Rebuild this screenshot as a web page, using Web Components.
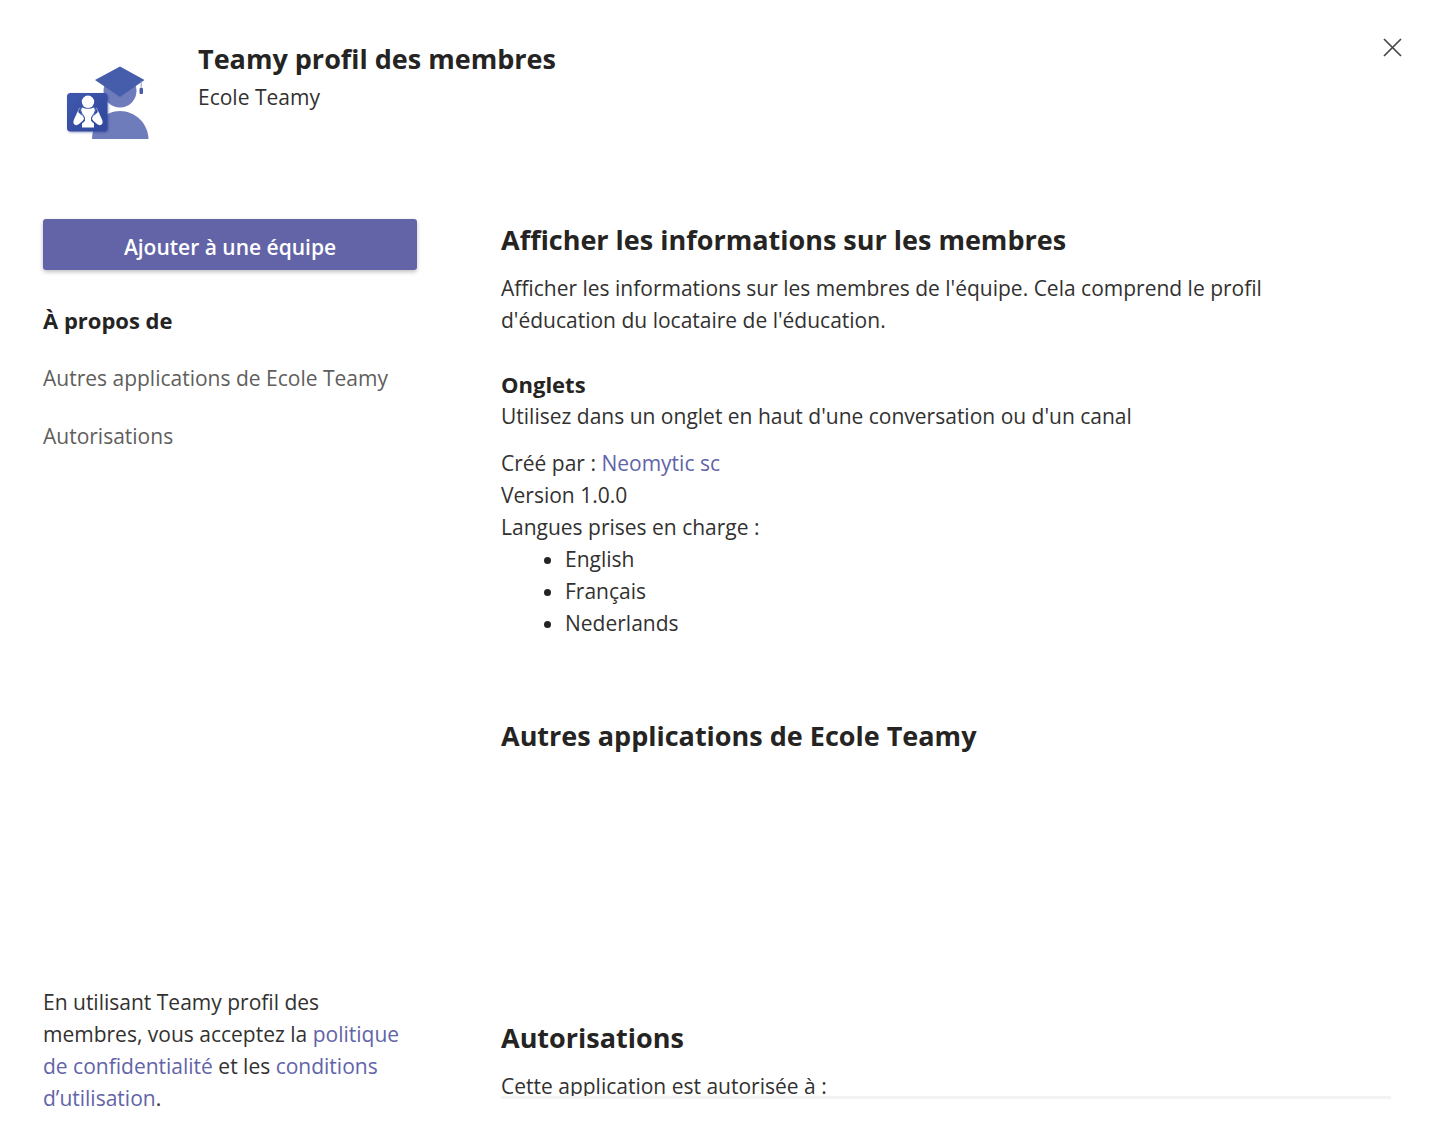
<!DOCTYPE html>
<html lang="fr">
<head>
<meta charset="utf-8">
<meta name="viewport" content="width=device-width, initial-scale=1">
<title>Teamy profil des membres</title>
<style>
  body {
    margin: 0;
    background: #fff;
    color: #323130;
    font: 21px/32px "Open Sans", "Noto Sans", sans-serif;
  }
</style>
</head>
<body>
<app-dialog>
  <app-header slot="header" name="Teamy profil des membres" publisher="Ecole Teamy"></app-header>
  <app-nav slot="side"></app-nav>
  <app-terms slot="side"></app-terms>
  <app-section heading="Afficher les informations sur les membres">
    <app-about></app-about>
  </app-section>
  <app-section heading="Autres applications de Ecole Teamy"></app-section>
  <app-section heading="Autorisations">Cette application est autorisée à :</app-section>
</app-dialog>

<script>
  const define = (name, html, fill) => {
    const template = document.createElement('template');
    template.innerHTML = `<style>
      :host { display: block; }
      * { box-sizing: border-box; }
      h1, h2, h3, p, ul { margin: 0; }
      a { color: #6264a7; text-decoration: none; }
      a:hover { text-decoration: underline; }
    </style>` + html;
    customElements.define(name, class extends HTMLElement {
      constructor() {
        super();
        this.attachShadow({ mode: 'open' }).append(template.content.cloneNode(true));
      }
      connectedCallback() { if (fill) fill(this, this.shadowRoot); }
    });
  };

  define('app-logo', `
    <style>svg { display: block; width: 110px; height: 96px; }</style>
    <svg viewBox="0 0 110 96" aria-hidden="true">
      <defs>
        <linearGradient id="tile" x1="0" y1="0" x2="1" y2="1">
          <stop offset="0" stop-color="#3f58ad"/><stop offset="1" stop-color="#2f479b"/>
        </linearGradient>
        <filter id="shade" x="-20%" y="-20%" width="150%" height="150%">
          <feDropShadow dx="1" dy="1" stdDeviation="1" flood-color="#26367c" flood-opacity=".45"/>
        </filter>
        <clipPath id="figure"><path d="M37 0h73v84H37z"/></clipPath>
      </defs>
      <g clip-path="url(#figure)">
        <circle cx="65" cy="36" r="16.500" fill="#6f7cbc"/>
        <path d="M37 84C37 68 50 56 65 56s28 12 28.500 28z" fill="#6f7cbc"/>
      </g>
      <path d="M65 11.500 89.500 25 65 42 40 25z" fill="#455dab"/>
      <path d="M86.200 26v8" stroke="#8d98cb" stroke-width="1"/>
      <rect x="84.500" y="33" width="3.500" height="6" rx="1" fill="#455dab"/>
      <rect x="12" y="38" width="40.500" height="38.500" rx="3.500" fill="url(#tile)" filter="url(#shade)"/>
      <g fill="#fff">
        <circle cx="33" cy="46.800" r="6.200"/>
        <path d="M27 52.500q6 2.500 12 0l1.500 2q-.5 6-4.500 8.500v3q3 1 3 3v3.500H27V69q0-2 3-3v-3q-4-2.500-4.500-8.500z"/>
        <path d="M25.500 52.500 24 53.500 19 64.500q-1.500 3.500.5 5t4.500-.5l4-3.500q2-2 0-4l-4.500-4q-1-2 2-5z"/>
        <path d="M40.500 52.500 42 53.500 47 64.500q1.500 3.500-.5 5t-4.500-.5l-4-3.500q-2-2 0-4l4.500-4q1-2-2-5z"/>
      </g>
      <path d="M26 53q-1 3 1 5.500t2.500 4.500-2 5M40 53q1 3-1 5.500t-2.500 4.500 2 5" fill="none" stroke="#3c54a8" stroke-width="1"/>
    </svg>`);

  define('close-button', `
    <style>
      button { display: block; padding: 8px; border: 0; background: none; color: #484644; cursor: pointer; }
      svg { display: block; width: 20px; height: 20px; }
    </style>
    <button type="button" aria-label="Fermer">
      <svg viewBox="0 0 20 20" aria-hidden="true"><path d="M2 2l17 17M19 2l-17 17" stroke="currentColor" stroke-width="1.700" fill="none"/></svg>
    </button>`);

  define('app-header', `
    <style>
      header { display: flex; align-items: flex-start; }
      app-logo { margin: 16px 33px 0 12px; }
      .names { flex: 1; }
      h1 { margin-bottom: 2px; color: #252423; font-size: 27px; line-height: 40px; }
      close-button { margin: -10px -19px 0 0; }
    </style>
    <header>
      <app-logo></app-logo>
      <div class="names"><h1></h1><p></p></div>
      <close-button></close-button>
    </header>`, (host, root) => {
      root.querySelector('h1').textContent = host.getAttribute('name');
      root.querySelector('p').textContent = host.getAttribute('publisher');
    });

  define('app-nav', `
    <style>
      button {
        display: block; width: 100%; padding: 12px 16px 7px; border: 0; border-radius: 3px;
        background: #6264a7; color: #fff; font: inherit; font-weight: 600; cursor: pointer;
        box-shadow: 0 2px 4px rgba(0, 0, 0, .25);
      }
      nav { display: flex; flex-direction: column; gap: 26px; margin-top: 34px; }
      nav a { color: #605e5c; }
      nav a[aria-current] { color: #252423; font-size: 22px; font-weight: 700; }
    </style>
    <button type="button">Ajouter à une équipe</button>
    <nav>
      <a href="#about" aria-current="true">À propos de</a>
      <a href="#more">Autres applications de Ecole Teamy</a>
      <a href="#permissions">Autorisations</a>
    </nav>`);

  define('app-terms', `
    <p>En utilisant Teamy profil des membres, vous acceptez la <a href="#privacy">politique de confidentialité</a> et les <a href="#terms">conditions d’utilisation</a>.</p>`);

  define('app-section', `
    <style>
      :host { min-height: 302px; }
      h2 { margin-bottom: 12px; color: #252423; font-size: 27px; line-height: 40px; }
    </style>
    <h2></h2>
    <slot></slot>`, (host, root) => {
      root.querySelector('h2').textContent = host.getAttribute('heading');
    });

  define('app-about', `
    <style>
      :host { padding-bottom: 77px; }
      .intro { max-width: 800px; margin-bottom: 32px; }
      h3 { color: #252423; font-size: 22px; line-height: 32px; }
      .details { margin-top: 15px; }
      ul { padding-left: 64px; }
      li::marker { color: #252423; }
    </style>
    <p class="intro">Afficher les informations sur les membres de l'équipe. Cela comprend le profil d'éducation du locataire de l'éducation.</p>
    <h3>Onglets</h3>
    <p>Utilisez dans un onglet en haut d'une conversation ou d'un canal</p>
    <div class="details">
      <p>Créé par : <a href="#publisher">Neomytic sc</a></p>
      <p>Version 1.0.0</p>
      <p>Langues prises en charge :</p>
      <ul><li>English</li><li>Français</li><li>Nederlands</li></ul>
    </div>`);

  define('app-dialog', `
    <style>
      :host { display: flex; flex-direction: column; gap: 68px; box-sizing: border-box; height: 100vh; padding: 39px 43px 26px; }
      .body { flex: 1; min-height: 0; display: grid; grid-template-columns: 374px minmax(0, 1fr); gap: 84px; }
      aside { display: flex; flex-direction: column; justify-content: space-between; }
      main { min-height: 0; margin-bottom: 15px; padding-top: 1px; overflow: hidden; border-bottom: 3px solid #f3f2f1; }
    </style>
    <slot name="header"></slot>
    <div class="body">
      <aside><slot name="side"></slot></aside>
      <main><slot></slot></main>
    </div>`);
</script>
</body>
</html>
